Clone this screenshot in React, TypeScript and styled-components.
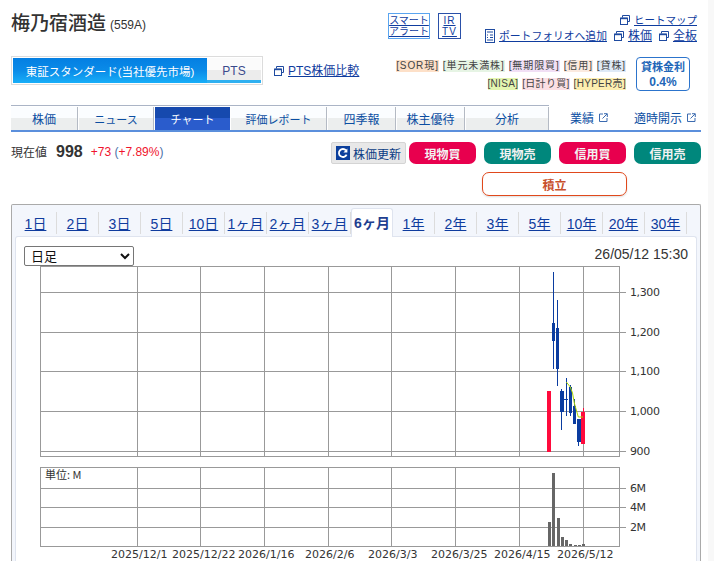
import styled, { createGlobalStyle } from "styled-components";

const GlobalStyle = createGlobalStyle`
  html, body {
    margin: 0;
    padding: 0;
    background: #fff;
  }
  body {
    font-family: "Liberation Sans", "Noto Sans CJK JP", sans-serif;
    color: #333;
  }
  a {
    color: #0f3c9e;
  }
`;

const PageStyle = styled.div`
  width: 714px;
  height: 561px;
  overflow: hidden;
  display: flex;
`;

const ContentStyle = styled.div`
  width: 690px;
  margin-left: 11px;
  display: flex;
  flex-direction: column;
`;

const ScrollStrip = styled.div`
  width: 6px;
  margin-left: 7px;
  height: 100%;
  background: #f8f8f8;
`;

//===========Header============>//
const HeaderStyle = styled.div`
  flex: none;
  height: 105px;
  display: flex;
  justify-content: space-between;
`;

const HeaderLeft = styled.div`
  display: flex;
  flex-direction: column;
`;

const TitleRow = styled.div`
  height: 56px;
  padding-top: 11px;
  box-sizing: border-box;
  display: flex;
  align-items: flex-start;
  gap: 4px;
`;

const TitleStyle = styled.h1`
  margin: 0;
  font-size: 19px;
  line-height: 26px;
  font-weight: 500;
  color: #333;
`;

const CodeStyle = styled.span`
  font-size: 12px;
  line-height: 28px;
  color: #333;
`;

const MarketRow = styled.div`
  display: flex;
  align-items: center;
  gap: 11px;
`;

const MarketBox = styled.div`
  width: 252px;
  height: 29px;
  box-sizing: border-box;
  border: 1px solid #dcdcdc;
  padding: 1px;
  display: flex;
`;

const MarketTab = styled.div<{ $active?: boolean }>`
  width: ${(p) => (p.$active ? "194px" : "54px")};
  display: flex;
  align-items: center;
  justify-content: center;
  font-size: ${(p) => (p.$active ? "11.5px" : "12px")};
  color: ${(p) => (p.$active ? "#fff" : "#3a4a8c")};
  background: ${(p) =>
    p.$active
      ? "linear-gradient(#047fe2 0%, #0a8be8 50%, #18aef8 100%)"
      : "linear-gradient(#fbfbfb 50%, #ececec 50%, #ececec 88%, #2fb0f0 88%)"};
`;

const LinkStyle = styled.a<{ $size?: number }>`
  display: inline-flex;
  align-items: center;
  gap: 4px;
  font-size: ${(p) => p.$size || 12}px;
  line-height: 14px;
  color: #0f3c9e;
  text-decoration: underline;
  white-space: nowrap;
`;

const HeaderRight = styled.div`
  width: 313px;
  display: flex;
  flex-direction: column;
`;

const ToolsRow = styled.div`
  height: 57px;
  box-sizing: border-box;
  padding-top: 13px;
  display: flex;
  align-items: flex-start;
  gap: 8px;
`;

const SmallBox = styled.a<{ $light?: boolean; $w: number }>`
  width: ${(p) => p.$w}px;
  height: 26px;
  box-sizing: border-box;
  border: 1px solid ${(p) => (p.$light ? "#5aa5f0" : "#2a50a8")};
  font-size: 10px;
  line-height: 11px;
  letter-spacing: ${(p) => (p.$light ? "0" : "1px")};
  text-align: center;
  color: #0f3c9e;
  text-decoration: underline;
  padding-top: 1px;
`;

const QuickLinks = styled.div`
  margin-left: auto;
  padding-right: 4px;
  display: flex;
  flex-direction: column;
  align-items: flex-end;
  gap: 2px;
`;

const QuickRow = styled.div`
  display: flex;
  gap: 7px;
`;

const TagsArea = styled.div`
  display: flex;
  justify-content: flex-end;
  gap: 10px;
  padding-right: 11px;
`;

const TagsColumn = styled.div`
  display: flex;
  flex-direction: column;
  align-items: flex-end;
  gap: 2px;
  padding-top: 1px;
`;

const TagRow = styled.div<{ $spacing: number }>`
  display: flex;
  gap: 4px;
  height: 16px;
  align-items: center;
  letter-spacing: ${(p) => p.$spacing}px;
`;

const TagStyle = styled.span<{ $bg: string }>`
  font-size: 10px;
  line-height: 12px;
  color: #444;
  background: ${(p) => p.$bg};
  white-space: nowrap;
`;

const RateBox = styled.div`
  width: 54px;
  height: 34px;
  box-sizing: border-box;
  border: 1px solid #2c74cc;
  border-radius: 4px;
  text-align: center;
  color: #2166b8;
  font-size: 11px;
  line-height: 15px;
  font-weight: bold;
  padding-top: 2px;
`;

const RateValue = styled.div`
  font-weight: bold;
  font-size: 12px;
`;
//>===========Header============//

//===========Nav============>//
const NavStyle = styled.div`
  flex: none;
  height: 27px;
  display: flex;
  border-bottom: 2px solid #5b8fdc;
  box-sizing: border-box;
`;

const NavTabs = styled.div`
  display: flex;
  gap: 1px;
  border-top: 1px solid #aab4c6;
`;

const NavTab = styled.div<{ $w: number; $size: number; $active?: boolean }>`
  width: ${(p) => p.$w}px;
  box-sizing: border-box;
  display: flex;
  align-items: center;
  justify-content: center;
  font-size: ${(p) => p.$size}px;
  margin-top: 1px;
  color: ${(p) => (p.$active ? "#fff" : "#0b4ea2")};
  border-right: ${(p) => (p.$active ? "none" : "1px solid #b4bac4")};
  background: ${(p) =>
    p.$active
      ? "linear-gradient(#1649ae 50%, #2a5ccc 50%)"
      : "linear-gradient(#fbfdff 50%, #eceeee 50%)"};
`;

const NavExtra = styled.a<{ $w: number; $pad: number }>`
  width: ${(p) => p.$w}px;
  box-sizing: border-box;
  padding-left: ${(p) => p.$pad}px;
  display: flex;
  align-items: center;
  gap: 5px;
  font-size: 12px;
  color: #0b4ea2;
  white-space: nowrap;
`;
//>===========Nav============//

//===========Price============>//
const PriceStyle = styled.div`
  flex: none;
  height: 72px;
  display: flex;
  justify-content: space-between;
`;

const PriceLeft = styled.div`
  height: 39px;
  display: flex;
  align-items: center;
  font-size: 12px;
`;

const PriceLabel = styled.span`
  font-size: 12px;
  color: #333;
  margin-right: 9px;
`;

const PriceValue = styled.span`
  font-size: 16px;
  font-weight: bold;
  color: #333;
  margin-right: 8px;
`;

const PriceChange = styled.span`
  color: #f0142d;
  font-size: 12px;
`;

const PriceOpen = styled.span`
  color: #4a6fa8;
`;

const ActionsStyle = styled.div`
  padding-top: 10px;
  display: flex;
  flex-direction: column;
  align-items: flex-end;
`;

const ActionRow = styled.div`
  display: flex;
  gap: 8px;
`;

const RefreshBtn = styled.div`
  width: 75px;
  height: 22px;
  box-sizing: border-box;
  margin-right: -5px;
  background: #e8e8e8;
  border: 1px solid #d4d4d4;
  border-radius: 2px;
  display: flex;
  align-items: center;
  padding-left: 4px;
  gap: 3px;
  font-size: 12px;
  color: #0b3c84;
  white-space: nowrap;
`;

const TradeBtn = styled.div<{ $bg: string }>`
  width: 67px;
  height: 22px;
  border-radius: 7px;
  background: ${(p) => p.$bg};
  color: #f2f2f2;
  font-size: 12px;
  font-weight: bold;
  display: flex;
  align-items: center;
  justify-content: center;
`;

const TsumitateBtn = styled.div`
  width: 145px;
  height: 24px;
  box-sizing: border-box;
  margin-top: 8px;
  margin-right: 74px;
  border: 1px solid #e0491c;
  border-radius: 7px;
  color: #c8502c;
  font-size: 12px;
  font-weight: bold;
  display: flex;
  align-items: center;
  justify-content: center;
  box-shadow: 0 1px 2px #ddd;
`;
//>===========Price============//

//===========Chart panel============>//
const PanelStyle = styled.div`
  flex: 1;
  min-height: 0;
  box-sizing: border-box;
  border: 1px solid #aaa;
  border-bottom: none;
  border-radius: 2px 2px 0 0;
  background: #f3f6fc;
  padding: 3px 3px 0;
  display: flex;
  flex-direction: column;
`;

const PeriodTabs = styled.div`
  flex: none;
  height: 28px;
  display: flex;
  align-items: flex-start;
`;

const PeriodTab = styled.a<{ $active?: boolean }>`
  width: 42px;
  box-sizing: border-box;
  display: flex;
  align-items: center;
  justify-content: center;
  white-space: nowrap;
  font-size: 14px;
  color: ${(p) => (p.$active ? "#1f3f90" : "#0f3c9e")};
  font-weight: ${(p) => (p.$active ? "bold" : "normal")};
  text-decoration: none;
  position: relative;
  z-index: 1;
  height: ${(p) => (p.$active ? "29px" : "22px")};
  margin-top: ${(p) => (p.$active ? "0" : "4px")};
  padding-bottom: ${(p) => (p.$active ? "2px" : "0")};
  background: ${(p) => (p.$active ? "#fff" : "transparent")};
  border: ${(p) => (p.$active ? "1px solid #dfe4ef" : "none")};
  border-bottom: ${(p) => (p.$active ? "none" : "")};
  border-right: ${(p) =>
    p.$active ? "1px solid #dfe4ef" : "1px solid #dcdcdc"};
  border-radius: ${(p) => (p.$active ? "3px 3px 0 0" : "0")};
`;

const PeriodLabel = styled.span<{ $plain?: boolean }>`
  text-decoration: ${(p) => (p.$plain ? "none" : "underline")};
`;

const InnerPanel = styled.div`
  flex: 1;
  min-height: 0;
  background: #fff;
  border: 1px solid #dfe4ef;
  border-bottom: none;
  border-radius: 3px 3px 0 0;
  display: flex;
  flex-direction: column;
`;

const ChartHead = styled.div`
  flex: none;
  height: 26px;
  box-sizing: border-box;
  padding: 9px 8px 0 8px;
  display: flex;
  justify-content: space-between;
  align-items: flex-start;
`;

const PeriodSelect = styled.select`
  width: 110px;
  height: 20px;
  font-family: "Liberation Sans", "Noto Sans CJK JP", sans-serif;
  font-size: 13px;
  color: #111;
  background: #fff;
  border: 1px solid #767676;
  border-radius: 2px;
  padding: 0 2px;
`;

const TimeStyle = styled.span`
  font-size: 14px;
  line-height: 16px;
  color: #333;
`;

const ChartSvg = styled.svg`
  display: block;
  flex: none;
  font-family: "DejaVu Sans", sans-serif;
  font-size: 11px;
`;
//>===========Chart panel============//

const WindowIcon = () => (
  <svg width="10" height="10" viewBox="0 0 10 10" fill="none" stroke="#1e4aa0">
    <path d="M2.5 2.5V.5h7v6h-2" />
    <rect x=".5" y="3" width="7" height="6.5" strokeWidth="1" />
    <path d="M1 3.5h6" strokeWidth="1.4" />
  </svg>
);

const DocIcon = () => (
  <svg width="10" height="14" viewBox="0 0 10 14" fill="none" stroke="#1e4aa0">
    <rect x=".5" y=".5" width="9" height="13" />
    <path d="M2 3h6M2 6h1M5 6h3M2 8.5h1M5 8.5h3M2 11h6" />
  </svg>
);

const ExternalIcon = () => (
  <svg width="9" height="9" viewBox="0 0 9 9" fill="none" stroke="#3a6ab0">
    <path d="M4 1H.5v7.5H8V5" />
    <path d="M3.5 5.5 8 1M5 .7h3.3V4" />
  </svg>
);

const RefreshIcon = () => (
  <svg width="14" height="14" viewBox="0 0 14 14">
    <rect width="14" height="14" fill="#0c3f9c" />
    <path d="M10.6 8.6A4 4 0 1 1 10 4.4" fill="none" stroke="#fff" strokeWidth="1.8" />
    <path d="M11.4 2.4v4h-4z" fill="#fff" />
  </svg>
);

const periods = ["1日", "2日", "3日", "5日", "10日", "1ヶ月", "2ヶ月", "3ヶ月", "6ヶ月", "1年", "2年", "3年", "5年", "10年", "20年", "30年"];

const navTabs = [
  { label: "株価", w: 67, size: 12 },
  { label: "ニュース", w: 75, size: 11 },
  { label: "チャート", w: 75, size: 11 },
  { label: "評価レポート", w: 96, size: 11 },
  { label: "四季報", w: 68, size: 12 },
  { label: "株主優待", w: 68, size: 12 },
  { label: "分析", w: 83, size: 12 },
];

const vLines = [137, 200, 264, 328, 391, 455, 519, 583];
const priceLines = [
  { y: 292, label: "1,300" },
  { y: 332, label: "1,200" },
  { y: 371, label: "1,100" },
  { y: 411, label: "1,000" },
  { y: 451, label: "900" },
];
const volumeLines = [
  { y: 488, label: "6M" },
  { y: 507, label: "4M" },
  { y: 527, label: "2M" },
];
const dates = [
  { x: 111, label: "2025/12/1" },
  { x: 172, label: "2025/12/22" },
  { x: 238, label: "2026/1/16" },
  { x: 305, label: "2026/2/6" },
  { x: 368, label: "2026/3/3" },
  { x: 431, label: "2026/3/25" },
  { x: 494, label: "2026/4/15" },
  { x: 557, label: "2026/5/12" },
];

// x = wick, h/l = wick ends, bl/br/t/b = body box
const candles = [
  { c: "#ff0a3c", x: 549, h: 391, l: 452, bl: 547, br: 551, t: 391, b: 452 },
  { c: "#0a3ca0", x: 553.5, h: 272, l: 369, bl: 552, br: 555, t: 323, b: 341 },
  { c: "#0a3ca0", x: 557.5, h: 300, l: 386, bl: 556, br: 559, t: 328, b: 369 },
  { c: "#0a3ca0", x: 561.5, h: 389, l: 430, bl: 560, br: 564, t: 391, b: 412 },
  { c: "#0a3ca0", x: 566.5, h: 378, l: 416, bl: 563, br: 568, t: 399, b: 400 },
  { c: "#0a3ca0", x: 570.5, h: 385, l: 416, bl: 569, br: 572, t: 387, b: 413 },
  { c: "#0a3ca0", x: 574.5, h: 399, l: 424, bl: 573, br: 576, t: 406, b: 424 },
  { c: "#0a3ca0", x: 578.5, h: 419, l: 446, bl: 577, br: 581, t: 419, b: 442 },
  { c: "#ff0a3c", x: 583.5, h: 408, l: 444, bl: 581, br: 585, t: 412, b: 444 },
];

const volumes = [
  { x: 548, t: 522 },
  { x: 552, t: 473 },
  { x: 557, t: 518 },
  { x: 561, t: 537 },
  { x: 565, t: 540 },
  { x: 569, t: 544 },
  { x: 574, t: 545 },
  { x: 578, t: 545 },
  { x: 582, t: 544 },
];

const GRID = "#999";

export default function App() {
  return (
    <PageStyle>
      <GlobalStyle />
      <ContentStyle>
        <HeaderStyle>
          <HeaderLeft>
            <TitleRow>
              <TitleStyle>梅乃宿酒造</TitleStyle>
              <CodeStyle>(559A)</CodeStyle>
            </TitleRow>
            <MarketRow>
              <MarketBox>
                <MarketTab $active>東証スタンダード(当社優先市場)</MarketTab>
                <MarketTab>PTS</MarketTab>
              </MarketBox>
              <LinkStyle>
                <WindowIcon />
                PTS株価比較
              </LinkStyle>
            </MarketRow>
          </HeaderLeft>

          <HeaderRight>
            <ToolsRow>
              <SmallBox $light $w={42}>
                スマート
                <br />
                アラート
              </SmallBox>
              <SmallBox $w={23}>
                IR
                <br />
                TV
              </SmallBox>
              <QuickLinks>
                <QuickRow>
                  <LinkStyle $size={10.5}>
                    <WindowIcon />
                    ヒートマップ
                  </LinkStyle>
                </QuickRow>
                <QuickRow>
                  <LinkStyle $size={10.8}>
                    <DocIcon />
                    ポートフォリオへ追加
                  </LinkStyle>
                  <LinkStyle>
                    <WindowIcon />
                    株価
                  </LinkStyle>
                  <LinkStyle>
                    <WindowIcon />
                    全板
                  </LinkStyle>
                </QuickRow>
              </QuickLinks>
            </ToolsRow>
            <TagsArea>
              <TagsColumn>
                <TagRow $spacing={0.9}>
                  <TagStyle $bg="#fde0c8">[SOR現]</TagStyle>
                  <TagStyle $bg="#e6f4e4">[単元未満株]</TagStyle>
                  <TagStyle $bg="#f1dff5">[無期限買]</TagStyle>
                  <TagStyle $bg="#fbeadf">[信用]</TagStyle>
                  <TagStyle $bg="#dfeaf7">[貸株]</TagStyle>
                </TagRow>
                <TagRow $spacing={0.3}>
                  <TagStyle $bg="#e4f5b0">[NISA]</TagStyle>
                  <TagStyle $bg="#fbdfe4">[日計り買]</TagStyle>
                  <TagStyle $bg="#fdeeb0">[HYPER売]</TagStyle>
                </TagRow>
              </TagsColumn>
              <RateBox>
                貸株金利
                <RateValue>0.4%</RateValue>
              </RateBox>
            </TagsArea>
          </HeaderRight>
        </HeaderStyle>

        <NavStyle>
          <NavTabs>
            {navTabs.map((t) => (
              <NavTab key={t.label} $w={t.w} $size={t.size} $active={t.label === "チャート"}>
                {t.label}
              </NavTab>
            ))}
          </NavTabs>
          <NavExtra $w={66} $pad={21}>
            業績
            <ExternalIcon />
          </NavExtra>
          <NavExtra $w={81} $pad={19}>
            適時開示
            <ExternalIcon />
          </NavExtra>
        </NavStyle>

        <PriceStyle>
          <PriceLeft>
            <PriceLabel>現在値</PriceLabel>
            <PriceValue>998</PriceValue>
            <PriceChange>
              +73 <PriceOpen>(</PriceOpen>+7.89%<PriceOpen>)</PriceOpen>
            </PriceChange>
          </PriceLeft>
          <ActionsStyle>
            <ActionRow>
              <RefreshBtn>
                <RefreshIcon />
                株価更新
              </RefreshBtn>
              <TradeBtn $bg="#e8004e">現物買</TradeBtn>
              <TradeBtn $bg="#00877c">現物売</TradeBtn>
              <TradeBtn $bg="#e8004e">信用買</TradeBtn>
              <TradeBtn $bg="#00877c">信用売</TradeBtn>
            </ActionRow>
            <TsumitateBtn>積立</TsumitateBtn>
          </ActionsStyle>
        </PriceStyle>

        <PanelStyle>
          <PeriodTabs>
            {periods.map((p) => (
              <PeriodTab key={p} $active={p === "6ヶ月"}>
                <PeriodLabel $plain={p === "6ヶ月"}>{p}</PeriodLabel>
              </PeriodTab>
            ))}
          </PeriodTabs>
          <InnerPanel>
            <ChartHead>
              <PeriodSelect defaultValue="日足">
                <option>日足</option>
                <option>週足</option>
                <option>月足</option>
              </PeriodSelect>
              <TimeStyle>26/05/12 15:30</TimeStyle>
            </ChartHead>
            {/* the numbers below are page pixels, read off the chart image */}
            <ChartSvg width="680" height="300" viewBox="16 263 680 300">
              <g stroke={GRID} strokeWidth="1" fill="none" shapeRendering="crispEdges">
                <rect x="40.5" y="266.5" width="579" height="190" />
                <rect x="40.5" y="467.5" width="579" height="79" />
                {vLines.map((x) => (
                  <path key={x} d={`M${x + 0.5} 266V456M${x + 0.5} 467V546`} />
                ))}
                {priceLines.map((l) => (
                  <path key={l.y} d={`M40 ${l.y + 0.5}H626`} />
                ))}
                {volumeLines.map((l) => (
                  <path key={l.y} d={`M40 ${l.y + 0.5}H626`} />
                ))}
              </g>

              {candles.map((c, i) => (
                <g key={i} fill={c.c} shapeRendering="crispEdges">
                  <rect x={c.x - 0.5} y={c.h} width="1" height={c.l - c.h} />
                  <rect x={c.bl} y={c.t} width={c.br - c.bl} height={c.b - c.t} />
                </g>
              ))}
              <polyline
                points="566.3,382 570.3,387 572.5,393 574.3,403 578.3,417 583,417"
                fill="none"
                stroke="#a8d400"
                strokeWidth="1"
              />

              {volumes.map((v) => (
                <rect key={v.x} x={v.x} y={v.t} width="3" height={546 - v.t} fill="#666" shapeRendering="crispEdges" />
              ))}

              <g fill="#333">
                {priceLines.map((l) => (
                  <text key={l.label} x="630" y={l.y + 4} letterSpacing="-0.4">
                    {l.label}
                  </text>
                ))}
                {volumeLines.map((l) => (
                  <text key={l.label} x="630" y={l.y + 4} letterSpacing="-0.4">
                    {l.label}
                  </text>
                ))}
                <text x="45" y="479" fontSize="11" fontFamily="'Noto Sans CJK JP', sans-serif">
                  単位: M
                </text>
                {dates.map((d) => (
                  <text key={d.label} x={d.x} y="558">
                    {d.label}
                  </text>
                ))}
              </g>
            </ChartSvg>
          </InnerPanel>
        </PanelStyle>
      </ContentStyle>
      <ScrollStrip />
    </PageStyle>
  );
}
